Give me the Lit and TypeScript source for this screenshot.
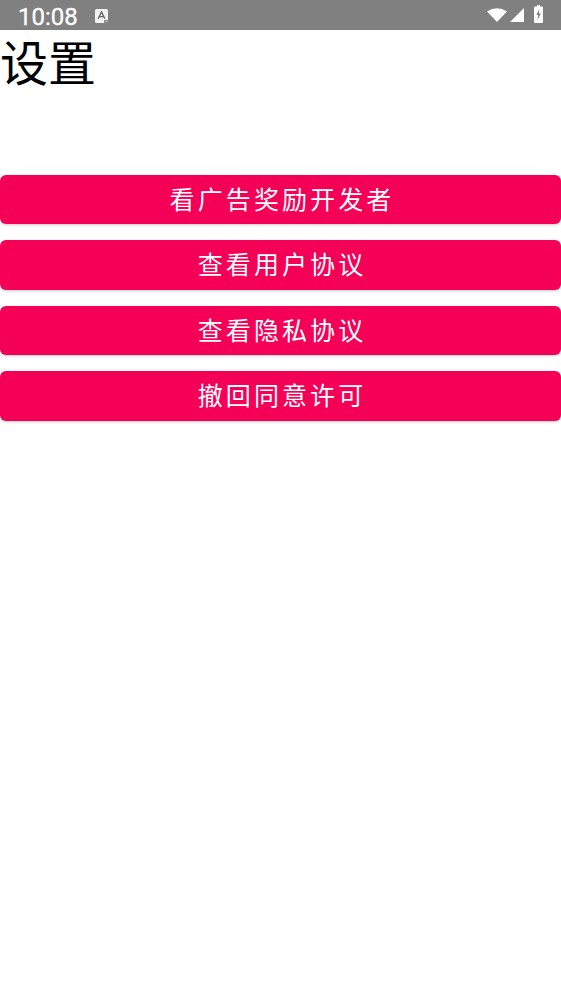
import { LitElement, html, css } from "lit";
import { customElement } from "lit/decorators.js";

const LABELS = ["看广告奖励开发者", "查看用户协议", "查看隐私协议", "撤回同意许可"];

@customElement("app-root")
export class AppRoot extends LitElement {
  static styles = css`
    :host {
      display: block;
      width: 561px;
      height: 999px;
      background: #fff;
      overflow: hidden;
      font-family: "Noto Sans CJK SC", "Roboto", sans-serif;
    }
    .status {
      height: 30px;
      background: #808080;
      display: flex;
      align-items: center;
      color: #fff;
      padding: 0 18px;
      box-sizing: border-box;
    }
    .time {
      font-family: Roboto, sans-serif;
      font-size: 24px;
      line-height: 26px;
      padding-top: 4px;
      height: 30px;
      box-sizing: border-box;
      width: 60px;
      -webkit-text-stroke: 0.3px #fff;
    }
    .a-icon {
      margin-left: 17px;
      margin-top: 1px;
      display: block;
    }
    .right {
      margin-left: auto;
      display: flex;
      align-items: flex-start;
      height: 30px;
    }
    .right svg { display: block; }
    .wifi { margin-top: 8px; }
    .signal { margin: 8px 0 0 3px; }
    .bat { margin: 5px 0 0 10px; }
    .title {
      font-family: Roboto, "Noto Sans CJK SC", sans-serif;
      font-size: 48px;
      line-height: 69px;
      color: #000;
      height: 144.8px;
    }
    .list {
      display: flex;
      flex-direction: column;
      gap: 16.35px;
    }
    .btn {
      height: 49.2px;
      padding: 0 0 3px 3px;
      box-sizing: border-box;
      background: #f50057;
      color: #fff;
      border-radius: 6px;
      display: flex;
      align-items: center;
      justify-content: center;
      font-size: 25px;
      letter-spacing: 3.1px;
      box-shadow: 0 1px 3px rgba(0, 0, 0, 0.22);
    }
  `;

  render() {
    return html`
      <div class="status">
        <span class="time">10:08</span>
        <svg class="a-icon" width="13" height="14" viewBox="0 0 13 14">
          <path d="M1.5 0 H11.5 Q13 0 13 1.5 V11 H9 V14 H1.5 Q0 14 0 12.5 V1.5 Q0 0 1.5 0 Z" fill="#f2f2f2"></path>
          <path d="M3.2 9.8 L6.5 2.8 L9.8 9.8 M4.5 7.6 H8.5" stroke="#666" stroke-width="1.4" fill="none"></path>
          <path d="M9.5 12.5 H13" stroke="#bbb" stroke-width="1.4" stroke-dasharray="1 0.6" fill="none"></path>
        </svg>
        <div class="right">
          <svg class="wifi" width="20" height="14" viewBox="0 0 20 14"><path d="M0 3.6 Q10 -3.2 20 3.6 L10 14 Z" fill="#fff"></path></svg>
          <svg class="signal" width="14" height="14" viewBox="0 0 14 14"><path d="M14 0 V14 H0 Z" fill="#fff"></path></svg>
          <svg class="bat" width="9" height="18" viewBox="0 0 9 18">
            <path d="M3 0 H6 V1.5 H8 Q9 1.5 9 2.5 V17 Q9 18 8 18 H1 Q0 18 0 17 V2.5 Q0 1.5 1 1.5 H3 Z" fill="#fff"></path>
            <path d="M5.4 4 L2.4 10 H4.2 L3.6 15 L6.8 8.6 H4.9 Z" fill="#808080"></path>
          </svg>
        </div>
      </div>
      <div class="title">设置</div>
      <div class="list">
        ${LABELS.map((l) => html`<div class="btn">${l}</div>`)}
      </div>
    `;
  }
}
